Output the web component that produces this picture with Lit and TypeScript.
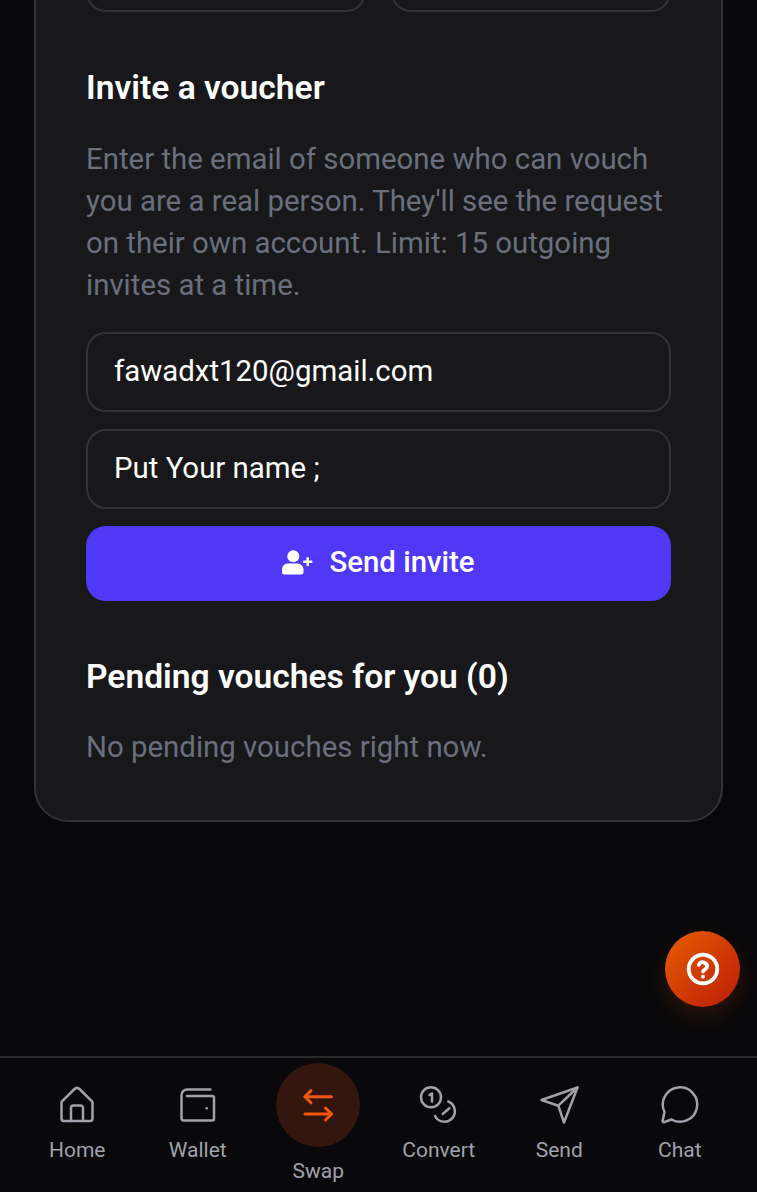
import { LitElement, html, css, svg } from "lit";
import { customElement } from "lit/decorators.js";

const navItems = [
  {
    label: "Home",
    icon: svg`<path d="M4.500 17a3 3 0 0 1 1-2.200L17.500 3a3.700 3.700 0 0 1 5 0l12 11.800a3 3 0 0 1 1 2.200v15.500a2.500 2.500 0 0 1-2.500 2.500H7a2.500 2.500 0 0 1-2.500-2.500z"/><path d="M14 35V22a2.500 2.500 0 0 1 2.500-2.500h7A2.500 2.500 0 0 1 26 22v13"/>`,
  },
  {
    label: "Wallet",
    icon: svg`<path d="M32.500 3.500H9A5.500 5.500 0 0 0 3.500 9v23A2.500 2.500 0 0 0 6 34.500h28a2 2 0 0 0 2-2V12a2 2 0 0 0-2-2H9"/><circle class="dot" cx="28.700" cy="22.300" r="1.300"/>`,
  },
  {
    label: "Swap",
    active: true,
    icon: svg`<path d="M33.500 11.700H7"/><path d="M13 5.500 7 11.700l6 6.100"/><path d="M7 29h26.500"/><path d="M27.500 23l6 6-6 6"/>`,
  },
  {
    label: "Convert",
    icon: svg`<circle cx="12" cy="11.300" r="10"/><path d="M10.500 9l2.500-1.500v8"/><path d="M29.300 15.500A10.500 10.500 0 1 1 16 30"/><path d="M23.700 28l6.600-5.700"/>`,
  },
  {
    label: "Send",
    icon: svg`<path d="M38.500 1.500 2.500 14l16.800 5.700L25 36.500z"/><path d="M19.300 19.700 38.500 1.500"/>`,
  },
  {
    label: "Chat",
    icon: svg`<path d="M11.500 33.500A17.200 17.200 0 1 0 4.500 26L2.600 34.800a1.200 1.200 0 0 0 1.500 1.400z"/>`,
  },
];

@customElement("app-root")
export class AppRoot extends LitElement {
  static styles = css`
    :host {
      display: block;
      height: 1199px;
      background: #fff;
      font-family: Roboto, "Liberation Sans", sans-serif;
      overflow: hidden;
      position: relative;
    }
    .screen {
      height: 1192px;
      background: #08080a;
      display: flex;
      flex-direction: column;
    }
    .main {
      flex: 1;
      overflow: hidden;
      min-height: 0;
    }
    .card {
      margin: -42px 34px 0;
      padding: 0 50px 52px;
      background: #18181b;
      border: 2px solid #333336;
      border-radius: 34px;
    }
    .stats {
      display: grid;
      grid-template-columns: 1fr 1fr;
      gap: 25px;
    }
    .stat {
      height: 50px;
      border: 2px solid #333336;
      border-top: 0;
      border-radius: 0 0 20px 20px;
    }
    h2 {
      margin: 0;
      color: #fff;
      font-size: 33.600px;
      line-height: 40px;
      font-weight: 600;
    }
    .invite-title {
      margin-top: 56px;
    }
    p {
      margin: 0;
      color: #6b6f7b;
      font-size: 29.400px;
      line-height: 42px;
    }
    .intro {
      margin-top: 30px;
    }
    .field {
      margin-top: 26px;
      height: 80px;
      box-sizing: border-box;
      border: 2px solid #333336;
      border-radius: 20px;
      padding: 0 26px 2px;
      display: flex;
      align-items: center;
      color: #fff;
      font-size: 29.400px;
    }
    .field + .field {
      margin-top: 17px;
    }
    .send {
      margin-top: 17px;
      height: 75px;
      padding-bottom: 3px;
      box-sizing: border-box;
      border-radius: 20px;
      background: #4f39f6;
      color: #fff;
      display: flex;
      align-items: center;
      justify-content: center;
      gap: 16px;
      font-size: 29.400px;
      font-weight: 500;
    }
    .send svg {
      width: 31px;
      height: 25px;
      fill: #fff;
    }
    .pending-title {
      margin-top: 56px;
    }
    .none {
      margin-top: 29px;
    }
    nav {
      flex: none;
      height: 136px;
      box-sizing: border-box;
      border-top: 2px solid #2a2a2d;
      background: #09090b;
      padding: 0 17px;
      display: grid;
      grid-template-columns: repeat(6, 1fr);
    }
    .item {
      display: flex;
      flex-direction: column;
      align-items: center;
      padding-top: 28px;
      color: #a1a1aa;
      font-size: 21px;
      line-height: 24px;
    }
    .item svg {
      width: 40px;
      height: 40px;
      overflow: visible;
      fill: none;
      stroke: #a1a1aa;
      stroke-width: 2.500;
      stroke-linecap: round;
      stroke-linejoin: round;
      margin-bottom: 12px;
    }
    .item svg .dot {
      fill: #a1a1aa;
      stroke: none;
    }
    .item.active {
      padding-top: 5px;
    }
    .bubble {
      width: 84px;
      height: 84px;
      border-radius: 50%;
      background: #33170e;
      display: flex;
      align-items: center;
      justify-content: center;
      margin-bottom: 12px;
    }
    .item.active svg {
      margin: 0;
      stroke: #f4560f;
      stroke-width: 3;
    }
    .help {
      position: absolute;
      left: 665px;
      top: 931px;
      width: 75px;
      height: 76px;
      border-radius: 50%;
      background: linear-gradient(135deg, #e85d04, #b91c06);
      box-shadow: 0 10px 24px rgba(234, 88, 12, 0.16);
      display: flex;
      align-items: center;
      justify-content: center;
    }
    .help svg {
      width: 38px;
      height: 38px;
      fill: none;
      stroke: #fff;
      stroke-width: 2.400;
      stroke-linecap: round;
      stroke-linejoin: round;
    }
  `;

  render() {
    return html`
      <div class="screen">
        <div class="main">
          <section class="card">
            <div class="stats"><div class="stat"></div><div class="stat"></div></div>
            <h2 class="invite-title">Invite a voucher</h2>
            <p class="intro">
              Enter the email of someone who can vouch you are a real person. They'll see the
              request on their own account. Limit: 15 outgoing invites at a time.
            </p>
            <div class="field">fawadxt120@gmail.com</div>
            <div class="field">Put Your name ;</div>
            <div class="send">
              <svg viewBox="0 0 31 25">
                <circle cx="11.300" cy="6.300" r="6" />
                <path d="M7 13.500h8.500a6 6 0 0 1 6 6v3a2 2 0 0 1-2 2H2a2 2 0 0 1-2-2v-3a6 6 0 0 1 7-6z" />
                <path d="M24.500 7.300h2.400v3.200h3.400v2.400h-3.400v3.200h-2.400v-3.200h-3.300v-2.400h3.300z" />
              </svg>
              <span>Send invite</span>
            </div>
            <h2 class="pending-title">Pending vouches for you (0)</h2>
            <p class="none">No pending vouches right now.</p>
          </section>
        </div>
        <nav>
          ${navItems.map((item) =>
            item.active
              ? html`<div class="item active">
                  <div class="bubble"><svg viewBox="0 0 40 40">${item.icon}</svg></div>
                  <span>${item.label}</span>
                </div>`
              : html`<div class="item">
                  <svg viewBox="0 0 40 40">${item.icon}</svg>
                  <span>${item.label}</span>
                </div>`
          )}
        </nav>
      </div>
      <div class="help">
        <svg viewBox="0 0 24 24">
          <circle cx="12" cy="12" r="9" />
          <path d="M9.400 9.400a2.700 2.700 0 0 1 5.200.9c0 1.800-2.600 2.300-2.600 3.300" />
          <path d="M12 16.900h.01" />
        </svg>
      </div>
    `;
  }
}
